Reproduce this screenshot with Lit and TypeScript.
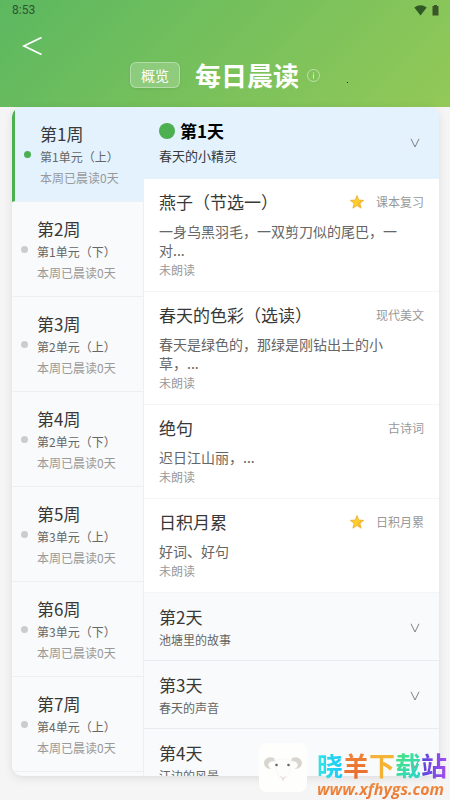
import { LitElement, html, css, svg, nothing } from "lit";
import { customElement } from "lit/decorators.js";
import { classMap } from "lit/directives/class-map.js";

interface Week { name: string; unit: string; active?: boolean }
interface Lesson { title: string; preview: string; tag: string; star?: boolean }
interface Day { name: string; topic: string; lessons?: Lesson[] }

const WEEKS: Week[] = [
  { name: "第1周", unit: "第1单元（上）", active: true },
  { name: "第2周", unit: "第1单元（下）" },
  { name: "第3周", unit: "第2单元（上）" },
  { name: "第4周", unit: "第2单元（下）" },
  { name: "第5周", unit: "第3单元（上）" },
  { name: "第6周", unit: "第3单元（下）" },
  { name: "第7周", unit: "第4单元（上）" },
];

const DAYS: Day[] = [
  {
    name: "第1天",
    topic: "春天的小精灵",
    lessons: [
      { title: "燕子（节选一）", preview: "一身乌黑羽毛，一双剪刀似的尾巴，一对...", tag: "课本复习", star: true },
      { title: "春天的色彩（选读）", preview: "春天是绿色的，那绿是刚钻出土的小草，...", tag: "现代美文" },
      { title: "绝句", preview: "迟日江山丽，...", tag: "古诗词" },
      { title: "日积月累", preview: "好词、好句", tag: "日积月累", star: true },
    ],
  },
  { name: "第2天", topic: "池塘里的故事" },
  { name: "第3天", topic: "春天的声音" },
  { name: "第4天", topic: "江边的风景" },
];

const chevron = html`<svg class="chevron" viewBox="0 0 10 10" aria-hidden="true">
  ${svg`<path d="M1 0.8 L5 9 L9 0.8" fill="none" stroke="#808080" stroke-width="1"/>`}
</svg>`;

const star = html`<svg class="star" viewBox="0 0 24 24" role="img" aria-label="重点">
  ${svg`<path d="M12 1 L15.1 8.6 L23.4 9.2 L17 14.5 L19.1 22.6 L12 18.1 L4.9 22.6 L7 14.5 L0.6 9.2 L8.9 8.6 Z" fill="#fdd02f" stroke="#e5a52c" stroke-width="1.2" stroke-linejoin="round"/>
  <path d="M12 18.1 L19.1 22.6 L17 14.5 L23.4 9.2 L12 13 Z" fill="#f6b42c" opacity=".6"/>`}
</svg>`;

@customElement("app-root")
export class AppRoot extends LitElement {
  static styles = css`
    :host {
      display: flex;
      flex-direction: column;
      position: relative;
      height: 100vh;
      overflow: hidden;
      background: #f5f5f5;
      color: #383838;
      font-family: "Noto Sans CJK SC", sans-serif;
    }
    * { box-sizing: border-box; }
    button {
      font: inherit;
      color: inherit;
      border: 0;
      margin: 0;
      background: none;
      text-align: left;
    }
    h1, h2, p { margin: 0; font-weight: 400; }

    .header {
      flex: none;
      background: linear-gradient(135deg, #5cb860, #93c958);
      color: #fff;
      padding-bottom: 15px;
    }
    .status {
      display: flex;
      justify-content: space-between;
      align-items: center;
      height: 20px;
      padding: 0 11px 0 12px;
      font: 12px/20px Roboto, sans-serif;
      color: #2c5530;
    }
    .status-icons { display: flex; align-items: center; gap: 5px; }
    .wifi { width: 13px; height: 11px; }
    .battery { width: 7px; height: 11px; }
    .nav { display: flex; height: 38px; padding: 15px 22px 0; }
    .back { display: flex; width: 22px; height: 22px; padding: 0; }
    .back svg { width: 22px; height: 22px; }
    .title-row {
      display: flex;
      align-items: center;
      justify-content: center;
      position: relative;
      height: 34px;
    }
    .speck {
      position: absolute;
      left: 77%;
      bottom: 9px;
      width: 1px;
      height: 1px;
      background: #1c2a10;
    }
    .overview {
      height: 26px;
      padding: 0 10px;
      border: 1px solid rgba(255, 255, 255, 0.35);
      border-radius: 6px;
      background: rgba(255, 255, 255, 0.2);
      box-shadow: 0 1px 3px rgba(0, 0, 0, 0.08);
      font-size: 14px;
      line-height: 24px;
    }
    .title { margin: 0 8px 0 15px; font-size: 26px; line-height: 34px; font-weight: 700; }
    .info { width: 13px; height: 13px; }

    .card {
      flex: 1;
      min-height: 0;
      display: grid;
      grid-template-columns: 132px 1fr;
      margin: 0 11px 24px 12px;
      border-radius: 10px;
      overflow: hidden;
      background: #f8fafb;
      box-shadow: 0 2px 10px rgba(0, 0, 0, 0.1);
    }
    .weeks { min-height: 0; overflow: hidden; border-right: 1px solid #edeff1; }
    .week {
      display: flex;
      align-items: center;
      gap: 9px;
      width: 100%;
      height: 95px;
      padding: 1px 0 0 9px;
      border-bottom: 1px solid #edeff1;
    }
    .week.active { background: #e3f2fd; border-left: 3px solid #4caf50; }
    .dot { flex: none; width: 7px; height: 7px; border-radius: 50%; background: #ccc; }
    .active .dot { background: #4caf50; }
    .week-text { display: flex; flex-direction: column; white-space: nowrap; }
    .week-name { font-size: 17px; line-height: 26px; }
    .week-unit { font-size: 12px; line-height: 20px; color: #666; }
    .week-done { font-size: 12px; line-height: 22px; color: #999; }

    .days { min-height: 0; min-width: 0; overflow: hidden; }
    .day-head {
      display: flex;
      align-items: center;
      justify-content: space-between;
      width: 100%;
      height: 68px;
      padding: 2px 19px 0 15px;
      border-bottom: 1px solid #e9ecef;
    }
    .day-head.open { height: 72px; padding-top: 0; background: #e3f2fd; border-bottom: 0; }
    .day-text { display: flex; flex-direction: column; }
    .day-name { display: flex; align-items: center; gap: 5px; font-size: 17px; line-height: 24px; }
    .day-topic { font-size: 12px; line-height: 22px; color: #666; }
    .open .day-name { font-weight: 700; color: #000; line-height: 26px; }
    .open .day-topic { font-size: 13px; line-height: 24px; color: #383838; }
    .marker { width: 16px; height: 16px; border-radius: 50%; background: #4caf50; }
    .chevron { width: 10px; height: 10px; }

    .lesson { padding: 11px 15px; background: #fff; border-bottom: 1px solid #f4f5f6; }
    .lesson-top { display: flex; align-items: center; height: 24px; }
    .lesson-title { flex: 1; font-size: 17px; line-height: 24px; }
    .star { width: 14px; height: 14px; margin-right: 12px; }
    .tag { font-size: 12px; line-height: 24px; color: #999; }
    .preview { max-width: 92%; margin-top: 8px; font-size: 14px; line-height: 19px; color: #666; }
    .state { font-size: 12px; line-height: 20px; color: #999; }

    .brand {
      position: absolute;
      right: 3px;
      bottom: 0;
      display: flex;
      align-items: flex-start;
      gap: 9px;
      text-decoration: none;
    }
    .brand-logo { width: 50px; height: 50px; }
    .brand-text { display: flex; flex-direction: column; padding-top: 9px; }
    .brand-name { font-size: 26px; line-height: 26px; font-weight: 700; white-space: nowrap; }
    .brand-name span, .brand-url { color: transparent; background-clip: text; -webkit-background-clip: text; }
    .brand-name .g1 { background-image: linear-gradient(90deg, #35e4e4, #16c8f8); }
    .brand-name .g2 { background-image: linear-gradient(180deg, #f0883c, #e8682c); }
    .brand-name .g3 { background-image: linear-gradient(90deg, #f4b03a, #f5b531); }
    .brand-name .g4 { background-image: linear-gradient(135deg, #4ee86c, #28d0d8); }
    .brand-name .g5 { background-image: linear-gradient(90deg, #5848dc, #a44cf0); }
    .brand-url {
      font: italic 700 16px/22px "Open Sans", sans-serif;
      background-image: linear-gradient(180deg, #f2984a, #e8702c);
    }
  `;

  private renderWeek(w: Week) {
    return html`<button class=${classMap({ week: true, active: !!w.active })}>
      <span class="dot"></span>
      <span class="week-text">
        <span class="week-name">${w.name}</span>
        <span class="week-unit">${w.unit}</span>
        <span class="week-done">本周已晨读0天</span>
      </span>
    </button>`;
  }

  private renderLesson(l: Lesson) {
    return html`<article class="lesson">
      <div class="lesson-top">
        <h2 class="lesson-title">${l.title}</h2>
        ${l.star ? star : nothing}
        <span class="tag">${l.tag}</span>
      </div>
      <p class="preview">${l.preview}</p>
      <p class="state">未朗读</p>
    </article>`;
  }

  private renderDay(d: Day) {
    const open = !!d.lessons;
    return html`<section>
      <button class=${classMap({ "day-head": true, open })} aria-expanded=${open}>
        <span class="day-text">
          <span class="day-name">${open ? html`<span class="marker"></span>` : nothing}${d.name}</span>
          <span class="day-topic">${d.topic}</span>
        </span>
        ${chevron}
      </button>
      ${d.lessons?.map((l) => this.renderLesson(l))}
    </section>`;
  }

  render() {
    return html`
      <header class="header">
        <div class="status">
          <span>8:53</span>
          <span class="status-icons">
            <svg class="wifi" viewBox="0 0 13 11"><path d="M0.3 2.6 Q6.5 -2 12.7 2.6 L6.5 10.6 Z" fill="#2f5a24" /></svg>
            <svg class="battery" viewBox="0 0 7 11"><path d="M2 0 H5 V1 H6.5 V10.6 H0.5 V1 H2 Z" fill="#3a5526" /></svg>
          </span>
        </div>
        <div class="nav">
          <button class="back" aria-label="返回">
            <svg viewBox="0 0 22 22"><path d="M19.5 2.5 L2 11 L19.5 19.5" fill="none" stroke="#fff" stroke-width="1.8" /></svg>
          </button>
        </div>
        <div class="title-row">
          <button class="overview">概览</button>
          <h1 class="title">每日晨读</h1>
          <svg class="info" viewBox="0 0 13 13">
            <circle cx="6.5" cy="6.5" r="6" fill="none" stroke="#fff" stroke-opacity=".6" stroke-width=".8" />
            <path d="M6.5 3.4 V4.4 M6.5 5.2 V9.6" stroke="#fff" stroke-opacity=".7" stroke-width="1" />
          </svg>
          <span class="speck"></span>
        </div>
      </header>
      <main class="card">
        <nav class="weeks">${WEEKS.map((w) => this.renderWeek(w))}</nav>
        <div class="days">${DAYS.map((d) => this.renderDay(d))}</div>
      </main>
      <a class="brand" href="#">
        <svg class="brand-logo" viewBox="0 0 50 50">
          <rect x="1" y="0" width="48" height="49" rx="8" fill="#fefefc" />
          <path d="M16.5 15.500 C12 12.500 6 15.500 6 20 C6.300 24 9.500 26.300 13.500 25.800 C10.500 24.500 9.500 22 11 20 C12.500 18.200 15 18 16.500 18.500 Z M33.500 15.500 C38 12.500 44 15.500 44 20 C43.700 24 40.500 26.300 36.500 25.800 C39.500 24.500 40.500 22 39 20 C37.500 18.200 35 18 33.500 18.500 Z" fill="#d8d6ce" />
          <path d="M17 18 Q25 13 33 18 Q33 28 29 35 Q25 40 21 35 Q17 28 17 18 Z" fill="#fdfdfb" stroke="#f3f3ef" stroke-width=".6" />
          <circle cx="18.5" cy="22" r="1.3" fill="#666" />
          <circle cx="30.5" cy="22" r="1.3" fill="#666" />
          <path d="M22.5 33.500 L25 35.500 L27.500 33.500 M25 35.500 V37.500" fill="none" stroke="#c9aea6" stroke-width=".6" />
        </svg>
        <span class="brand-text">
          <span class="brand-name"><span class="g1">晓</span><span class="g2">羊</span><span class="g3">下</span><span class="g4">载</span><span class="g5">站</span></span>
          <span class="brand-url">www.xfhygs.com</span>
        </span>
      </a>
    `;
  }
}
